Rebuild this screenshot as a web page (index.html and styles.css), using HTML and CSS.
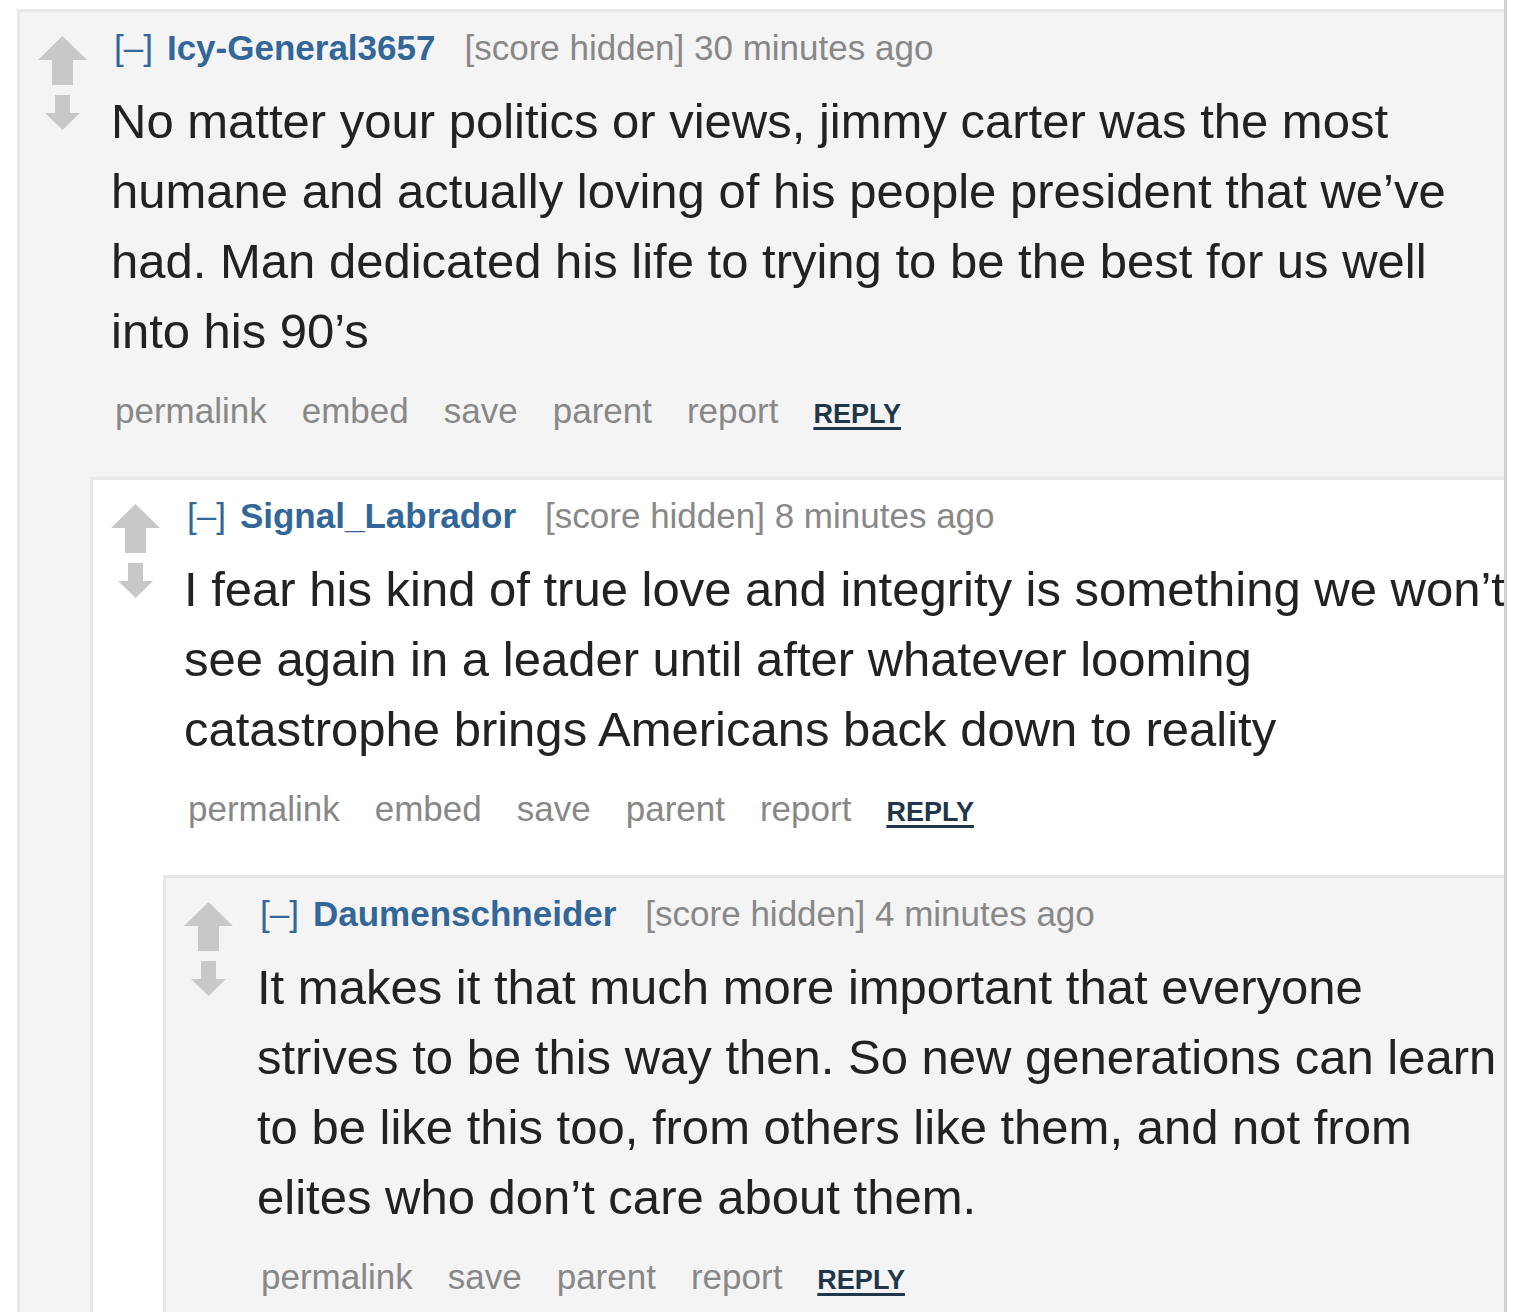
FILE: index.html
```html
<!DOCTYPE html>
<html>
<head>
<meta charset="utf-8">
<link rel="stylesheet" href="styles.css">
</head>
<body>
<div class="viewport">
  <div class="tree">
    <div class="comment odd">
      <div class="entry">
        <div class="midcol">
          <svg class="up" width="49" height="49" viewBox="0 0 49 49"><polygon points="24.5,0 49,24 35,24 35,49 14,49 14,24 0,24"/></svg>
          <svg class="down" width="35" height="35" viewBox="0 0 35 35"><polygon points="10,0 25,0 25,18 35,18 17.5,35 0,18 10,18"/></svg>
        </div>
        <div class="textcol">
          <p class="tagline"><a class="expand">[–]</a><a class="author">Icy-General3657</a><span class="score">[score hidden] 30 minutes ago</span></p>
          <div class="md">No matter your politics or views, jimmy carter was the most humane and actually loving of his people president that we’ve had. Man dedicated his life to trying to be the best for us well into his 90’s</div>
          <ul class="flat-list">
            <li>permalink</li><li>embed</li><li>save</li><li>parent</li><li>report</li><li class="reply">REPLY</li>
          </ul>
        </div>
      </div>
      <div class="child">
        <div class="comment even">
          <div class="entry">
            <div class="midcol">
              <svg class="up" width="49" height="49" viewBox="0 0 49 49"><polygon points="24.5,0 49,24 35,24 35,49 14,49 14,24 0,24"/></svg>
              <svg class="down" width="35" height="35" viewBox="0 0 35 35"><polygon points="10,0 25,0 25,18 35,18 17.5,35 0,18 10,18"/></svg>
            </div>
            <div class="textcol">
              <p class="tagline"><a class="expand">[–]</a><a class="author">Signal_Labrador</a><span class="score">[score hidden] 8 minutes ago</span></p>
              <div class="md">I fear his kind of true love and integrity is something we won’t see again in a leader until after whatever looming catastrophe brings Americans back down to reality</div>
              <ul class="flat-list">
                <li>permalink</li><li>embed</li><li>save</li><li>parent</li><li>report</li><li class="reply">REPLY</li>
              </ul>
            </div>
          </div>
          <div class="child">
            <div class="comment odd">
              <div class="entry">
                <div class="midcol">
                  <svg class="up" width="49" height="49" viewBox="0 0 49 49"><polygon points="24.5,0 49,24 35,24 35,49 14,49 14,24 0,24"/></svg>
                  <svg class="down" width="35" height="35" viewBox="0 0 35 35"><polygon points="10,0 25,0 25,18 35,18 17.5,35 0,18 10,18"/></svg>
                </div>
                <div class="textcol">
                  <p class="tagline"><a class="expand">[–]</a><a class="author">Daumenschneider</a><span class="score">[score hidden] 4 minutes ago</span></p>
                  <div class="md">It makes it that much more important that everyone strives to be this way then. So new generations can learn to be like this too, from others like them, and not from elites who don’t care about them.</div>
                  <ul class="flat-list">
                    <li>permalink</li><li>save</li><li>parent</li><li>report</li><li class="reply">REPLY</li>
                  </ul>
                </div>
              </div>
            </div>
          </div>
        </div>
      </div>
    </div>
  </div>
</div>
</body>
</html>
```
FILE: styles.css
```css
html, body {
  margin: 0;
  padding: 0;
  background: #ffffff;
}
body {
  font-family: "Liberation Sans", Arial, sans-serif;
  color: #222222;
}
.viewport {
  width: 1504px;
  height: 1312px;
  overflow: hidden;
  border-right: 3px solid #d2d2d2;
}
.tree {
  width: 1495px;
  margin-left: 17px;
  padding-top: 9px;
}
.comment {
  border: 3px solid #e8e8e8;
  border-right: none;
  padding-bottom: 30px;
}
.comment.odd {
  background: #f4f4f4;
}
.comment.even {
  background: #ffffff;
}
.entry {
  display: flex;
  align-items: flex-start;
}
.midcol {
  width: 49px;
  flex-shrink: 0;
  margin-left: 18px;
  margin-right: 27px;
  padding-top: 24px;
  display: flex;
  flex-direction: column;
  align-items: center;
  gap: 10px;
}
.midcol svg {
  display: block;
  fill: #c8c8c8;
  filter: blur(0.5px);
}
.textcol {
  flex: 1;
  min-width: 0;
}
.tagline {
  margin: 0;
  padding-top: 14px;
  font-size: 35px;
  line-height: 44px;
  white-space: nowrap;
  color: #888888;
}
.expand {
  color: #336699;
  margin-right: 14px;
}
.author {
  color: #336699;
  font-weight: bold;
  margin-right: 29px;
}
.md {
  margin-top: 16px;
  margin-left: -3px;
  font-size: 49px;
  line-height: 70px;
  color: #222222;
}
.flat-list {
  list-style: none;
  margin: 23px 0 0 1px;
  padding: 0;
  height: 44px;
  display: flex;
  align-items: baseline;
  gap: 35px;
  font-size: 35px;
  line-height: 44px;
  color: #888888;
  white-space: nowrap;
}
.flat-list .reply {
  font-size: 27px;
  line-height: 30px;
  font-weight: bold;
  color: #22364a;
  text-decoration: underline;
  text-decoration-thickness: 3px;
  text-underline-offset: 4px;
}
.child {
  margin-left: 70px;
  margin-top: 44px;
}
```
